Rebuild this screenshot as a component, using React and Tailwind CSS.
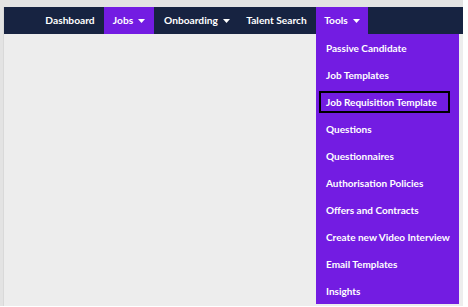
import React from 'react';

const TOOLS = [
  'Passive Candidate',
  'Job Templates',
  'Job Requisition Template',
  'Questions',
  'Questionnaires',
  'Authorisation Policies',
  'Offers and Contracts',
  'Create new Video Interview',
  'Email Templates',
  'Insights',
];

const Caret = () => (
  <svg width="7" height="4" viewBox="0 0 7 4" className="ml-[5px]">
    <path d="M0 0h7L3.5 4z" fill="#fff" />
  </svg>
);

export default function App() {
  return (
    <div
      className="w-[468px] h-[307px] bg-white overflow-hidden"
      style={{ fontFamily: 'Lato, "Noto Sans", sans-serif' }}
    >
      <div className="w-[463px] h-[306px] bg-[#e3e3e3] pt-[7px] pl-[3px]">
        <div className="relative w-[460px] h-[299px] bg-[#ededed] border-l border-[#d9d9d9]">
          <nav className="flex h-[27px] bg-[#172341] pl-[32px] text-white text-[10.2px] font-bold whitespace-nowrap">
            <div className="flex items-center justify-center w-[68px]">Dashboard</div>
            <div className="flex items-center justify-center bg-[#731ce2] w-[50px]">
              Jobs
              <Caret />
            </div>
            <div className="flex items-center w-[83px] pl-[10px]">
              Onboarding
              <Caret />
            </div>
            <div className="flex items-center justify-center w-[79px]">Talent Search</div>
            <div className="flex items-center justify-center bg-[#731ce2] w-[52px]">
              Tools
              <Caret />
            </div>
          </nav>
          <div className="absolute left-[312px] top-[27px] w-[143px] bg-[#731ce2] text-white text-[10px] font-bold whitespace-nowrap">
            {TOOLS.map((t) => (
              <div key={t} className="h-[27px] flex items-center pl-[3px] pt-[1px]">
                {t === 'Job Requisition Template' ? (
                  <div className="w-[131px] h-[22px] flex items-center pl-[5px] border-2 border-black">
                    {t}
                  </div>
                ) : (
                  <div className="pl-[7px]">{t}</div>
                )}
              </div>
            ))}
          </div>
        </div>
      </div>
    </div>
  );
}
